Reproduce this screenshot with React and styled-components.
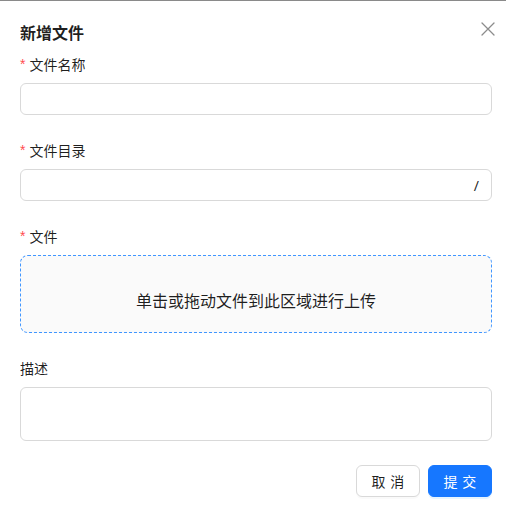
import React from "react";
import styled, { createGlobalStyle } from "styled-components";

const Global = createGlobalStyle`
  html, body { margin: 0; padding: 0; background: #fff; overflow: hidden; }
  body {
    font-family: "Noto Sans", "Noto Sans CJK SC", sans-serif;
    font-size: 14px;
    color: rgba(0,0,0,0.88);
  }
  * { box-sizing: border-box; }
`;

const Page = styled.div`
  width: 506px;
  height: 507px;
  border-top: 1px solid #8a8a8a;
  overflow: hidden;
`;

const Modal = styled.div`
  position: relative;
  margin-left: -4px;
  width: 520px;
  padding: 19px 24px 20px;
  background: #fff;
  font-family: "Noto Sans CJK SC", "Noto Sans", sans-serif;
`;

const Title = styled.div`
  font-size: 16px;
  font-weight: 700;
  line-height: 24px;
  margin-bottom: 9px;
  color: rgba(0,0,0,0.88);
`;

const Close = styled.button`
  position: absolute;
  top: 17px;
  right: 17px;
  width: 22px;
  height: 22px;
  border: 0;
  padding: 0;
  background: transparent;
  display: flex;
  align-items: center;
  justify-content: center;
  color: rgba(0,0,0,0.45);
`;

const Form = styled.div`
  display: flex;
  flex-direction: column;
  gap: 24px;
`;

const Item = styled.div`
  display: flex;
  flex-direction: column;
`;

const Label = styled.div`
  height: 22px;
  line-height: 22px;
  margin-bottom: 8px;
  font-size: 14px;
  display: flex;
  align-items: center;
`;

const Star = styled.span`
  color: #ff4d4f;
  font-family: "Liberation Sans", sans-serif;
  font-size: 14px;
  margin-right: 4px;
  line-height: 1;
`;

const InputBox = styled.div`
  height: ${(p) => p.$h || 32}px;
  border: 1px solid #d9d9d9;
  border-radius: 6px;
  padding: 4px 11px;
  display: flex;
  align-items: center;
  justify-content: flex-end;
  background: #fff;
`;

const Suffix = styled.span`
  font-family: "Noto Sans", sans-serif;
  font-size: 14px;
  color: rgba(0,0,0,0.88);
  margin-right: 1px;
`;

const Dragger = styled.div`
  height: 78px;
  border: 1px dashed #4096ff;
  border-radius: 8px;
  background: #fafafa;
  display: flex;
  align-items: center;
  justify-content: center;
  padding-top: 12px;
  font-size: 16px;
  color: rgba(0,0,0,0.88);
`;

const Footer = styled.div`
  display: flex;
  justify-content: flex-end;
  gap: 8px;
`;

const Button = styled.button`
  height: 32px;
  width: 64px;
  padding: 0;
  border-radius: 6px;
  font-family: "Noto Sans CJK SC", sans-serif;
  font-size: 14px;
  letter-spacing: 0.34em;
  white-space: nowrap;
  border: 1px solid ${(p) => (p.$primary ? "#1677ff" : "#d9d9d9")};
  background: ${(p) => (p.$primary ? "#1677ff" : "#fff")};
  color: ${(p) => (p.$primary ? "#fff" : "rgba(0,0,0,0.88)")};
  box-shadow: ${(p) => (p.$primary ? "0 2px 0 rgba(5,145,255,0.1)" : "0 2px 0 rgba(0,0,0,0.02)")};
  display: flex;
  align-items: center;
  justify-content: center;
  & > span { margin-right: -0.34em; }
`;

export default function App() {
  return (
    <>
      <Global />
      <Page>
        <Modal>
          <Close aria-label="close">
            <svg width="14" height="14" viewBox="0 0 14 14" fill="none">
              <path d="M1 1L13 13M13 1L1 13" stroke="currentColor" strokeWidth="1.3" strokeLinecap="round" />
            </svg>
          </Close>
          <Title>新增文件</Title>
          <Form>
            <Item>
              <Label><Star>*</Star>文件名称</Label>
              <InputBox />
            </Item>
            <Item>
              <Label><Star>*</Star>文件目录</Label>
              <InputBox><Suffix>/</Suffix></InputBox>
            </Item>
            <Item>
              <Label><Star>*</Star>文件</Label>
              <Dragger>单击或拖动文件到此区域进行上传</Dragger>
            </Item>
            <Item>
              <Label>描述</Label>
              <InputBox $h={54} />
            </Item>
            <Footer>
              <Button><span>取消</span></Button>
              <Button $primary><span>提交</span></Button>
            </Footer>
          </Form>
        </Modal>
      </Page>
    </>
  );
}
